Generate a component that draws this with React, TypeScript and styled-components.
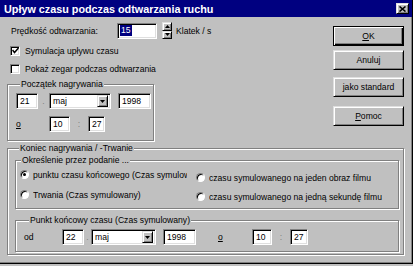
import React from 'react';
import styled, { createGlobalStyle, css } from 'styled-components';

const Global = createGlobalStyle`
  html, body { margin: 0; padding: 0; background: #c0c0c0; }
  body { font-family: "Liberation Sans", Arial, sans-serif; font-size: 8.6px; color: #000; }
  * { box-sizing: border-box; }
`;

const Window = styled.div`
  width: 413px;
  height: 264px;
  background: #c0c0c0;
  display: flex;
  flex-direction: column;
  box-shadow: inset -1px -1px 0 #000, inset -2px -2px 0 #808080;
`;

const TitleBar = styled.div`
  height: 17px;
  flex: none;
  background: #000080;
  color: #fff;
  display: flex;
  align-items: center;
  justify-content: space-between;
  padding: 0 3px 0 4px;
  margin-right: 1px;
`;

const TitleText = styled.span`
  font-weight: bold;
  font-size: 10.8px;
  white-space: nowrap;
`;

const raised = css`
  background: #c0c0c0;
  border: 1px solid;
  border-color: #dfdfdf #000 #000 #dfdfdf;
  box-shadow: inset 1px 1px 0 #fff, inset -1px -1px 0 #808080;
`;

const sunken = css`
  background: #fff;
  border: 1px solid;
  border-color: #808080 #fff #fff #808080;
  box-shadow: inset 1px 1px 0 #000, inset -1px -1px 0 #dfdfdf;
`;

const CloseButton = styled.div`
  ${raised};
  width: 13px;
  height: 11px;
  display: flex;
  align-items: center;
  justify-content: center;
`;

const Body = styled.div`
  display: flex;
  flex-direction: column;
  flex: 1;
`;

const TopSection = styled.div`
  display: flex;
`;

const LeftCol = styled.div`
  width: 333px;
  display: flex;
  flex-direction: column;
  padding-left: 7px;
`;

const ButtonCol = styled.div`
  display: flex;
  flex-direction: column;
`;

const PushButton = styled.div<{ $default?: boolean; $mt: number }>`
  ${raised};
  width: 71px;
  height: 20px;
  margin-top: ${p => p.$mt}px;
  display: flex;
  align-items: center;
  justify-content: center;
  ${p =>
    p.$default &&
    css`
      border: 1px solid #000;
      box-shadow: inset 1px 1px 0 #fff, inset -1px -1px 0 #000, inset -2px -2px 0 #808080;
    `}
`;

const U = styled.span`
  text-decoration: underline;
`;

const SpeedRow = styled.div`
  display: flex;
  align-items: center;
  height: 17px;
  margin-top: 5px;
  padding-left: 4px;
`;

const SpeedLabel = styled.span`
  width: 106px;
  white-space: nowrap;
`;

const Field = styled.div<{ $w: number }>`
  ${sunken};
  width: ${p => p.$w}px;
  height: 16px;
  flex: none;
  display: flex;
  align-items: center;
  padding-left: 3px;
  white-space: nowrap;
  overflow: hidden;
`;

const Selected = styled.span`
  background: #000080;
  color: #fff;
  padding: 0 1px;
  margin-left: -1px;
  line-height: 11px;
`;

const Spinner = styled.div`
  width: 10px;
  height: 17px;
  margin-left: 5px;
  display: flex;
  flex-direction: column;
`;

const SpinHalf = styled.div`
  ${raised};
  flex: 1;
  display: flex;
  align-items: center;
  justify-content: center;
`;

const UnitLabel = styled.span`
  margin-left: 4px;
  white-space: nowrap;
`;

const CheckRow = styled.div`
  display: flex;
  align-items: center;
  height: 13px;
  margin-top: 5px;
  padding-left: 3px;
  gap: 5px;
  white-space: nowrap;
`;

const CheckBox = styled.div`
  ${sunken};
  width: 10px;
  height: 10px;
  display: flex;
  align-items: center;
  justify-content: center;
`;

const Group = styled.fieldset<{ $w: number; $mt: number; $pl: number; $pr?: number; $pb: number; $pt?: number }>`
  margin: ${p => p.$mt}px 0 0 0;
  width: ${p => p.$w}px;
  padding: ${p => p.$pt ?? 3}px ${p => p.$pr ?? 4}px ${p => p.$pb}px ${p => p.$pl}px;
  border: 1px solid #808080;
  box-shadow: inset 1px 1px 0 #fff, 1px 1px 0 #fff;
  min-width: 0;
`;

const Legend = styled.legend<{ $ml: number }>`
  margin-left: ${p => p.$ml}px;
  padding: 0 1px;
  line-height: 11px;
  background: #c0c0c0;
  white-space: nowrap;
`;

const FieldRow = styled.div<{ $mt?: number }>`
  display: flex;
  align-items: center;
  height: 16px;
  margin-top: ${p => p.$mt ?? 0}px;
`;

const Sep = styled.span<{ $w: number }>`
  width: ${p => p.$w}px;
  flex: none;
  text-align: center;
  color: #808080;
`;

const RowLabel = styled.span<{ $w: number; $ml?: number }>`
  width: ${p => p.$w}px;
  margin-left: ${p => p.$ml ?? 0}px;
  flex: none;
`;

const SelectBox = styled(Field)`
  justify-content: space-between;
  padding-right: 2px;
`;

const DropBtn = styled.div`
  ${raised};
  width: 11px;
  height: 12px;
  display: flex;
  align-items: center;
  justify-content: center;
`;

const Gap = styled.span<{ $w: number }>`
  width: ${p => p.$w}px;
  flex: none;
`;

const OuterGroupWrap = styled.div`
  padding-left: 7px;
`;

const RadioGrid = styled.div`
  display: grid;
  grid-template-columns: 176px 1fr;
  padding-left: 4px;
`;

const RadioCol = styled.div<{ $pt: number; $gap: number }>`
  display: flex;
  flex-direction: column;
  padding-top: ${p => p.$pt}px;
  gap: ${p => p.$gap}px;
`;

const RadioRow = styled.div`
  display: flex;
  align-items: center;
  height: 13px;
  gap: 4px;
  min-width: 0;
`;

const RadioCircle = styled.div`
  width: 9px;
  height: 9px;
  flex: none;
  border-radius: 50%;
  background: #fff;
  border: 1px solid;
  border-color: #808080 #fff #fff #808080;
  box-shadow: inset 1px 1px 0 #000;
  display: flex;
  align-items: center;
  justify-content: center;
`;

const RadioDot = styled.div`
  width: 3px;
  height: 3px;
  border-radius: 50%;
  background: #000;
`;

const RadioLabel = styled.span<{ $clip?: number }>`
  white-space: nowrap;
  overflow: hidden;
  ${p => p.$clip && css`width: ${p.$clip}px;`}
`;

const Tri = ({ up }: { up?: boolean }) => (
  <svg width="5" height="3" viewBox="0 0 5 3">
    <path d={up ? 'M2.5 0 L5 3 L0 3 Z' : 'M0 0 L5 0 L2.5 3 Z'} fill="#000" />
  </svg>
);

const Radio = ({ checked, label, clip }: { checked?: boolean; label: string; clip?: number }) => (
  <RadioRow>
    <RadioCircle>{checked && <RadioDot />}</RadioCircle>
    <RadioLabel $clip={clip}>{label}</RadioLabel>
  </RadioRow>
);

const Select = ({ w, value }: { w: number; value: string }) => (
  <SelectBox $w={w}>
    <span>{value}</span>
    <DropBtn>
      <Tri />
    </DropBtn>
  </SelectBox>
);

export default function App() {
  return (
    <>
      <Global />
      <Window>
        <TitleBar>
          <TitleText>Upływ czasu podczas odtwarzania ruchu</TitleText>
          <CloseButton>
            <svg width="7" height="6" viewBox="0 0 7 6">
              <path d="M0.5 0.5 L6.5 5.5 M6.5 0.5 L0.5 5.5" stroke="#000" strokeWidth="1.6" />
            </svg>
          </CloseButton>
        </TitleBar>
        <Body>
          <TopSection>
            <LeftCol>
              <SpeedRow>
                <SpeedLabel>Prędkość odtwarzania:</SpeedLabel>
                <Field $w={40}>
                  <Selected>15</Selected>
                </Field>
                <Spinner>
                  <SpinHalf>
                    <Tri up />
                  </SpinHalf>
                  <SpinHalf>
                    <Tri />
                  </SpinHalf>
                </Spinner>
                <UnitLabel>Klatek / s</UnitLabel>
              </SpeedRow>
              <CheckRow>
                <CheckBox>
                  <svg width="7" height="7" viewBox="0 0 7 7">
                    <path d="M0.5 3 L2.5 5.5 L6.5 1" stroke="#000" strokeWidth="1.5" fill="none" />
                  </svg>
                </CheckBox>
                Symulacja upływu czasu
              </CheckRow>
              <CheckRow>
                <CheckBox />
                Pokaż zegar podczas odtwarzania
              </CheckRow>
              <Group $w={147} $mt={4} $pl={8} $pb={8}>
                <Legend $ml={4}>Początek nagrywania</Legend>
                <FieldRow>
                  <Field $w={22}>21</Field>
                  <Sep $w={11}>.</Sep>
                  <Select w={62} value="maj" />
                  <Gap $w={7} />
                  <Field $w={33}>1998</Field>
                </FieldRow>
                <FieldRow $mt={7}>
                  <RowLabel $w={33}>
                    <U>o</U>
                  </RowLabel>
                  <Field $w={21}>10</Field>
                  <Sep $w={18}>:</Sep>
                  <Field $w={17}>27</Field>
                </FieldRow>
              </Group>
            </LeftCol>
            <ButtonCol>
              <PushButton $default $mt={9}>
                <span>
                  <U>O</U>K
                </span>
              </PushButton>
              <PushButton $mt={4}>Anuluj</PushButton>
              <PushButton $mt={7}>jako standard</PushButton>
              <PushButton $mt={9}>
                <span>
                  <U>P</U>omoc
                </span>
              </PushButton>
            </ButtonCol>
          </TopSection>
          <OuterGroupWrap>
            <Group $w={397} $mt={2} $pl={7} $pr={4} $pb={2} $pt={1}>
              <Legend $ml={4}>Koniec nagrywania / -Trwanie</Legend>
              <Group $w={384} $mt={0} $pl={0} $pr={0} $pb={5} $pt={0}>
                <Legend $ml={5}>Określenie przez podanie ...</Legend>
                <RadioGrid>
                  <RadioCol $pt={2} $gap={7}>
                    <Radio checked label="punktu czasu końcowego (Czas symulowany)" clip={154} />
                    <Radio label="Trwania (Czas symulowany)" />
                  </RadioCol>
                  <RadioCol $pt={5} $gap={6}>
                    <Radio label="czasu symulowanego na jeden obraz filmu" />
                    <Radio label="czasu symulowanego na jedną sekundę filmu" />
                  </RadioCol>
                </RadioGrid>
              </Group>
              <Group $w={384} $mt={6} $pl={8} $pr={0} $pb={6} $pt={3}>
                <Legend $ml={5}>Punkt końcowy czasu (Czas symulowany)</Legend>
                <FieldRow>
                  <RowLabel $w={38}>od</RowLabel>
                  <Field $w={22}>22</Field>
                  <Sep $w={7}>.</Sep>
                  <Select w={65} value="maj" />
                  <Gap $w={7} />
                  <Field $w={33}>1998</Field>
                  <RowLabel $w={34} $ml={22}>
                    <U>o</U>
                  </RowLabel>
                  <Field $w={20}>10</Field>
                  <Sep $w={18}>:</Sep>
                  <Field $w={18}>27</Field>
                </FieldRow>
              </Group>
            </Group>
          </OuterGroupWrap>
        </Body>
      </Window>
    </>
  );
}
